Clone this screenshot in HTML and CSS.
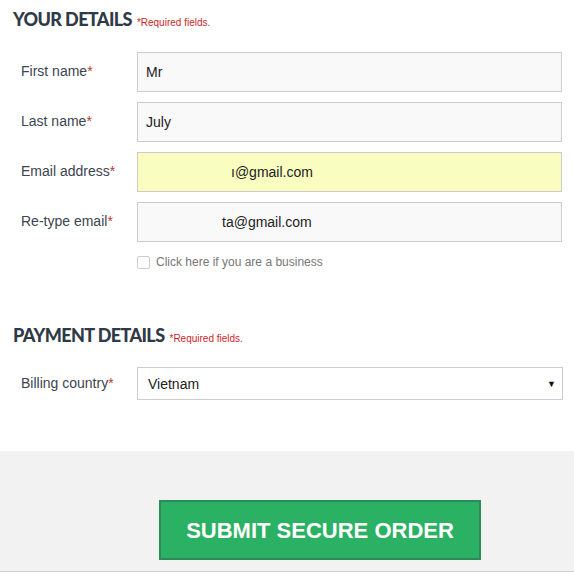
FILE: index.html
```html
<!DOCTYPE html>
<html>
<head>
<meta charset="utf-8">
<link rel="stylesheet" href="styles.css">
</head>
<body>
<div class="form">
  <h2 class="section-title">YOUR DETAILS <span class="req">*Required fields.</span></h2>
  <div class="fields">
    <div class="row">
      <label class="label">First name<span class="star">*</span></label>
      <div class="input">Mr</div>
    </div>
    <div class="row">
      <label class="label">Last name<span class="star">*</span></label>
      <div class="input">July</div>
    </div>
    <div class="row">
      <label class="label">Email address<span class="star">*</span></label>
      <div class="input input-yellow"><span class="email1">ı@gmail.com</span></div>
    </div>
    <div class="row">
      <label class="label">Re-type email<span class="star">*</span></label>
      <div class="input"><span class="email2">ta@gmail.com</span></div>
    </div>
    <div class="row">
      <span></span>
      <div class="check-line"><span class="checkbox"></span>Click here if you are a business</div>
    </div>
  </div>

  <h2 class="section-title pay-title">PAYMENT DETAILS <span class="req">*Required fields.</span></h2>
  <div class="row pay-row">
    <label class="label">Billing country<span class="star">*</span></label>
    <div class="select"><span>Vietnam</span><span class="arrow">▼</span></div>
  </div>
</div>
<div class="footer">
  <button class="submit">SUBMIT SECURE ORDER</button>
</div>
</body>
</html>
```

FILE: styles.css
```css
html, body {
  margin: 0;
  padding: 0;
  background: #ffffff;
}
body {
  width: 574px;
  height: 572px;
  overflow: hidden;
  font-family: "Liberation Sans", Arial, sans-serif;
}
.form {
  padding: 0 12px 0 13px;
  height: 451px;
  box-sizing: border-box;
}
.section-title {
  margin: 0;
  padding-top: 8px;
  font-family: Lato, "Open Sans", sans-serif;
  font-weight: 900;
  font-size: 18px;
  line-height: 22px;
  color: #2f3a46;
  letter-spacing: -0.6px;
  display: flex;
  align-items: baseline;
  gap: 5px;
}
.req {
  font-family: "Liberation Sans", Arial, sans-serif;
  font-weight: normal;
  font-size: 10px;
  letter-spacing: 0;
  color: #cc1f1f;
}
.fields {
  margin-top: 18px;
  display: flex;
  flex-direction: column;
  gap: 10px;
}
.row {
  display: grid;
  grid-template-columns: 124px 425px;
}
.label {
  padding-left: 8px;
  padding-top: 11px;
  font-size: 14px;
  line-height: 16px;
  color: #3b4450;
}
.star {
  color: #c0392b;
}
.input {
  height: 40px;
  box-sizing: border-box;
  border: 1px solid #cccccc;
  background: #f9f9f9;
  padding-left: 8px;
  display: flex;
  align-items: center;
  font-size: 14px;
  color: #222222;
}
.input-yellow {
  background: #fafdc0;
}
.email1 {
  padding-left: 85px;
}
.email2 {
  padding-left: 76px;
}
.check-line {
  margin-top: 2px;
  display: flex;
  align-items: center;
  gap: 6px;
  font-size: 12px;
  color: #777777;
  height: 16px;
}
.checkbox {
  width: 13px;
  height: 13px;
  box-sizing: border-box;
  border: 1px solid #cccccc;
  border-radius: 2px;
  background: #ffffff;
}
.pay-title {
  padding-top: 0;
  margin-top: 54px;
}
.pay-row {
  margin-top: 17px;
}
.pay-row .label {
  padding-top: 8px;
}
.select {
  height: 33px;
  width: 426px;
  box-sizing: border-box;
  border: 1px solid #cccccc;
  background: #ffffff;
  padding: 0 6px 0 10px;
  display: flex;
  align-items: center;
  justify-content: space-between;
  font-size: 14px;
  color: #222222;
}
.arrow {
  font-size: 9px;
  color: #111111;
}
.footer {
  height: 121px;
  box-sizing: border-box;
  background: #f2f2f2;
  border-bottom: 1px solid #d0d0d0;
  padding: 49px 0 0 159px;
}
.submit {
  width: 322px;
  height: 60px;
  box-sizing: border-box;
  border: 2px solid #2b8a57;
  background: #2bb163;
  color: #ffffff;
  font-family: "Liberation Sans", Arial, sans-serif;
  font-weight: bold;
  font-size: 22px;
  padding: 2px 0 0;
  margin: 0;
}
```
